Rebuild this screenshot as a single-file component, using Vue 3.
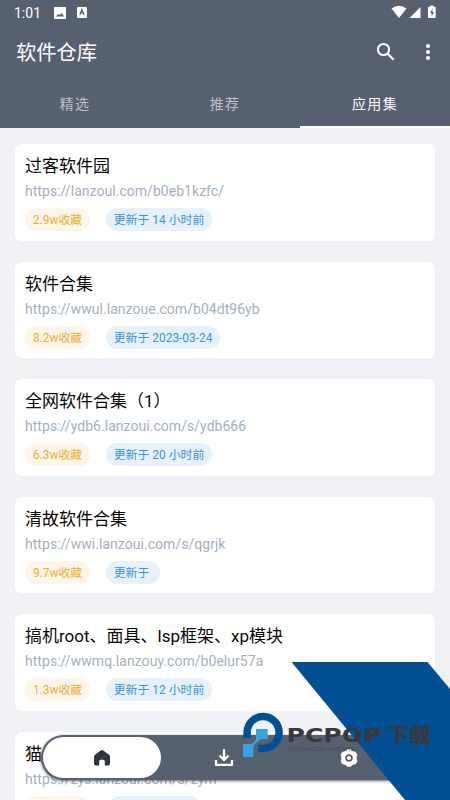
<script setup>
const tabs = ['精选', '推荐', '应用集']
const cards = [
  { title: '过客软件园', url: 'https://lanzoul.com/b0eb1kzfc/', stars: '2.9w收藏', time: '更新于 14 小时前' },
  { title: '软件合集', url: 'https://wwul.lanzoue.com/b04dt96yb', stars: '8.2w收藏', time: '更新于 2023-03-24' },
  { title: '全网软件合集（1）', url: 'https://ydb6.lanzoui.com/s/ydb666', stars: '6.3w收藏', time: '更新于 20 小时前' },
  { title: '清故软件合集', url: 'https://wwi.lanzoui.com/s/qgrjk', stars: '9.7w收藏', time: '更新于\u00a0' },
  { title: '搞机root、面具、lsp框架、xp模块', url: 'https://wwmq.lanzouy.com/b0elur57a', stars: '1.3w收藏', time: '更新于 12 小时前' },
  { title: '猫', url: 'https://zys.lanzoui.com/s/zym', stars: '', time: '' }
]
</script>

<template>
  <div class="screen">
    <header class="header">
      <div class="status">
        <span class="clock">1:01</span>
        <svg class="s-img" width="12" height="12" viewBox="0 0 12 12"><rect width="12" height="12" rx="1.3" fill="#fff" /><path d="M2 9.500L4.200 6.800l1.300 1.500L7.500 6l2.700 3.500z" fill="#57606f" /></svg>
        <svg class="s-a" width="10" height="11" viewBox="0 0 10 11"><rect width="10" height="11" rx="1.2" fill="#fff" /><path d="M2.800 7.800L4.900 2.500 7 7.800M3.500 6.200h2.700" fill="none" stroke="#57606f" stroke-width="1.200" /></svg>
        <svg class="s-right" width="46" height="14" viewBox="0 0 46 14">
          <path d="M0.500 3.500Q8 -2.200 15.500 3.500L8 13z" fill="#fff" />
          <path d="M29.500 2v11H18.500z" fill="#fff" />
          <path d="M39.300 0.500h3v1.300h1.700q.7 0 .7.700v9.800q0 .7-.7.700h-6.300q-.7 0-.7-.7V2.500q0-.7.7-.7h1.600z" fill="#fff" />
          <path d="M41.700 3.500L39 8h1.600v3.500L43 7h-1.600z" fill="#57606f" />
        </svg>
      </div>
      <div class="toolbar">
        <h1>软件仓库</h1>
        <svg class="search" width="24" height="24" viewBox="0 0 24 24"><circle cx="9.500" cy="9.500" r="5.600" fill="none" stroke="#fff" stroke-width="2" /><path d="M13.700 13.700l6 6" stroke="#fff" stroke-width="2.300" /></svg>
        <svg class="more" width="6" height="18" viewBox="0 0 6 18"><circle cx="3" cy="3" r="2.100" fill="#fff" /><circle cx="3" cy="9" r="2.100" fill="#fff" /><circle cx="3" cy="15" r="2.100" fill="#fff" /></svg>
      </div>
      <nav class="tabs">
        <div v-for="(t, i) in tabs" :key="t" class="tab" :class="{ active: i === 2 }">{{ t }}</div>
      </nav>
    </header>

    <main class="list">
      <article v-for="c in cards" :key="c.title" class="card">
        <h2>{{ c.title }}</h2>
        <p>{{ c.url }}</p>
        <div class="chips">
          <span class="chip gold">{{ c.stars }}</span>
          <span class="chip blue" :class="{ pending: !c.time }">{{ c.time }}</span>
        </div>
      </article>
    </main>

    <div class="dock">
      <div class="slot home">
        <svg width="18" height="18" viewBox="0 0 18 18"><path d="M7.700 1.400Q9 .4 10.300 1.400L16 5.700q1 .8 1 2V14.800q0 1.700-1.700 1.700h-3.500V12.300q0-1.800-2.800-1.800t-2.800 1.800v4.200H2.700Q1 16.500 1 14.800V7.700q0-1.200 1-2z" fill="#2f3542" /></svg>
      </div>
      <div class="slot">
        <svg width="20" height="20" viewBox="0 0 20 20" fill="none" stroke="#fff" stroke-width="2.300" stroke-linejoin="round"><path d="M10 1.300v10.500M5.500 7.500l4.500 4.500L14.500 7.500M2 12v4.800h16v-4.800" /></svg>
      </div>
      <div class="slot">
        <svg width="20" height="20" viewBox="0 0 20 20"><path d="M7.500 3L8.200 1.800h3.600L12.500 3l2.400 1.100 1.500 0 1.600 3-.8 1.400v3l.8 1.400-1.600 3h-1.600L12.500 17l-.7 1.200H8.200L7.500 17l-2.400-1.100H3.600l-1.600-3 .8-1.400v-3L2 7.100l1.600-3h1.500z" fill="#fff" stroke="#fff" stroke-width="1" stroke-linejoin="round" /><circle cx="10" cy="10" r="2.900" fill="none" stroke="#57606f" stroke-width="1.700" /></svg>
      </div>
    </div>

    <svg class="brand" width="210" height="138" viewBox="240 662 210 138">
      <path d="M291.500 662H427.500L450 689V800H405z" fill="#025093" />
      <path d="M247.100 738V732A16 16 0 1 1 263 748.500H258.300" fill="none" stroke="#025093" stroke-width="7.500" />
      <path d="M256 729h11.700v10.300h-5.500q-2 0-3.500 1.500l-4 3.700q-1.400 1.400-1.400 3V757H243V744h7.500q1.500 0 3-1.500l1.500-1.500q1-1 1-2.500z" fill="#36a4e2" />
      <text x="286.500" y="741.500" class="wordmark" textLength="95" lengthAdjust="spacingAndGlyphs">PCPOP</text>
      <text x="387" y="743" class="cjk" textLength="44" lengthAdjust="spacingAndGlyphs">下载</text>
      <text x="288" y="751" class="sub" textLength="67">PCPOP.COM WEBSITE</text>
    </svg>
  </div>
</template>

<style>
body { margin: 0; overflow: hidden; }
</style>
<style scoped>
.screen { position: relative; width: 450px; height: 800px; overflow: hidden; background: #f0f1f5; font-family: Roboto, "Noto Sans CJK SC", sans-serif; }
.header { height: 128px; background: #57606f; color: #fff; }
.status { display: flex; align-items: center; height: 25px; padding: 0 14px; }
.clock { width: 40px; font-size: 14px; font-weight: 400; }
.s-a { margin-left: 11px; }
.s-right { margin-left: auto; margin-right: -1px; margin-top: -2px; }
.toolbar { display: flex; align-items: center; height: 54px; padding: 0 19px 0 16px; }
h1 { margin: 0; flex: 1; font-size: 20.3px; font-weight: 400; line-height: 54px; padding-top: 2px; }
.search { margin-right: 27px; }
.tabs { display: flex; height: 49px; }
.tab { flex: 1; box-sizing: border-box; text-align: center; font-size: 14px; letter-spacing: 1.3px; line-height: 50px; color: #bcc1c9; }
.tab.active { color: #fff; border-bottom: 2px solid #fff; }
.list { display: flex; flex-direction: column; gap: 21px; padding: 16px 15px 0; }
.card { box-sizing: border-box; flex: none; height: 96.5px; padding: 10px; background: #fff; border-radius: 7px; }
h2 { margin: 0; font-size: 17px; line-height: 24px; font-weight: 400; color: #080808; white-space: nowrap; }
p { margin: 3px 0 0; font-size: 14px; line-height: 20px; letter-spacing: 0.04px; color: #a4b0be; }
.chips { display: flex; gap: 15.5px; margin-top: 7px; }
.chip { height: 23px; line-height: 24px; padding: 0 8px; border-radius: 12px; font-size: 11.9px; white-space: nowrap; }
.gold { box-sizing: border-box; min-width: 65px; color: #eeae30; background: #fdf5e9; }
.blue { color: #3795d2; background: #e6f1fb; }
.pending { width: 77px; margin-left: 2px; }
.dock { position: absolute; left: 41px; top: 735px; width: 371px; height: 45px; box-sizing: border-box; padding: 2px; display: flex; border-radius: 23px; background: #57606f; box-shadow: 0 1px 3px rgba(0, 0, 0, 0.6); }
.slot { flex: 1; display: flex; align-items: center; justify-content: center; }
.slot + .slot { padding-left: 2px; }
.home { flex: 0 0 118px; background: #fff; border-radius: 21px; }
.brand { position: absolute; left: 240px; top: 662px; }
.wordmark { font: 700 19px "DejaVu Sans", sans-serif; fill: #37393c; }
.cjk { font: 700 20.5px "Noto Sans CJK SC", sans-serif; fill: #37393c; stroke: #37393c; stroke-width: 0.3; }
.sub { font: 6px "Liberation Sans", sans-serif; fill: #454d5a; }
</style>
